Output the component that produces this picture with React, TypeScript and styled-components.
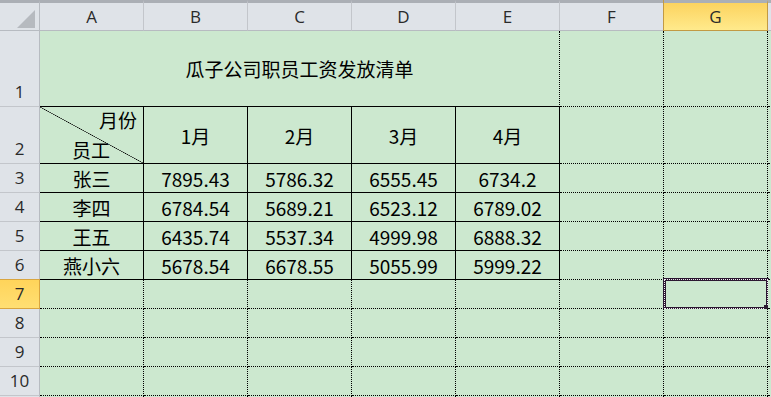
import { createGlobalStyle, styled } from "styled-components";

type Line = "solid" | "dotted" | "none";

const GlobalStyle = createGlobalStyle`
  html, body {
    margin: 0;
    padding: 0;
    overflow: hidden;
    background: #cce8cf;
  }
`

const lineCss = (l: Line = "dotted") =>
  l === "none" ? "1px solid transparent" : l === "solid" ? "1px solid #000" : "1px dotted #000";

const Sheet = styled.div`
  display: grid;
  grid-template-columns: 40px repeat(8, 104px);
  grid-template-rows: 31px 76px 57px repeat(9, 29px);
  width: 771px;
  height: 397px;
  overflow: hidden;
  box-sizing: border-box;
  * {
    box-sizing: border-box;
  }
`

const Corner = styled.div`
  position: relative;
  background: #dfe3e8;
  border-top: 3px solid #abafb5;
  border-right: 1px solid #b7bbc1;
  border-bottom: 1px solid #b7bbc1;

  &::after {
    content: "";
    position: absolute;
    left: 17px;
    top: 7px;
    width: 18px;
    height: 18px;
    background: #b6babf;
    clip-path: polygon(100% 0, 100% 100%, 0 100%);
  }
`

const ColHeader = styled.div<{ $active?: boolean }>`
  display: flex;
  align-items: center;
  justify-content: center;
  border-top: 3px solid #abafb5;
  border-right: 1px solid ${p => (p.$active ? "#c29a44" : "#c3c6cb")};
  border-bottom: 1px solid ${p => (p.$active ? "#c29a44" : "#b7bbc1")};
  background: ${p => (p.$active ? "linear-gradient(#fcd35f, #ffea8c)" : "#dfe3e8")};
  box-shadow: ${p => (p.$active ? "-1px 0 0 #c29a44" : "none")};
  font: 17px "Open Sans", "Noto Sans", sans-serif;
  color: #2a2a2a;
  padding-bottom: 1px;
`

const RowHeader = styled.div<{ $active?: boolean; $tall?: boolean }>`
  display: flex;
  justify-content: center;
  align-items: ${p => (p.$tall ? "flex-end" : "center")};
  padding-bottom: ${p => (p.$tall ? "2px" : "0")};
  background: ${p => (p.$active ? "linear-gradient(#ffd45a, #ffdf73)" : "#dfe3e8")};
  border-right: 1px solid ${p => (p.$active ? "#d9a53f" : "#b7bbc1")};
  border-bottom: 1px solid ${p => (p.$active ? "#d9a53f" : "#c3c6cb")};
  box-shadow: ${p => (p.$active ? "0 -1px 0 #d9a53f" : "none")};
  font: 17px "Open Sans", "Noto Sans", sans-serif;
  line-height: 24px;
  color: #2a2a2a;
`

const Cell = styled.div<{ $right?: Line; $bottom?: Line; $span?: number }>`
  grid-column: span ${p => p.$span ?? 1};
  position: relative;
  display: flex;
  align-items: center;
  justify-content: center;
  background: #cce8cf;
  border-right: ${p => lineCss(p.$right)};
  border-bottom: ${p => lineCss(p.$bottom)};
  font: 19px "Noto Sans CJK SC", sans-serif;
  color: #000;
  white-space: nowrap;
`

// split header cell: 月份 top right, 员工 bottom left, diagonal between
const SplitCell = styled(Cell)`
  flex-direction: column;
  align-items: stretch;
  justify-content: space-between;
  padding: 0 6px 0 32px;
  background:
    linear-gradient(to top right, transparent calc(50% - 0.6px), #000 50%, transparent calc(50% + 0.6px)),
    #cce8cf;
  line-height: 26px;
`

const SplitTop = styled.span`
  text-align: right;
`

const SplitBottom = styled.span`
  text-align: left;
`

const Selection = styled.div`
  position: absolute;
  top: -2px;
  left: -1px;
  right: -2px;
  bottom: -2px;
  border: 3px solid #2c1832;

  &::before {
    content: "";
    position: absolute;
    inset: -2px;
    border: 1px dotted #f5f0f5;
  }

  &::after {
    content: "";
    position: absolute;
    right: -4px;
    bottom: -4px;
    width: 6px;
    height: 6px;
    background: #2b1a30;
  }
`

const columns = ["A", "B", "C", "D", "E", "F", "G", "H"];
const months = ["1月", "2月", "3月", "4月"];

const salaries = [
  ["张三", "7895.43", "5786.32", "6555.45", "6734.2"],
  ["李四", "6784.54", "5689.21", "6523.12", "6789.02"],
  ["王五", "6435.74", "5537.34", "4999.98", "6888.32"],
  ["燕小六", "5678.54", "6678.55", "5055.99", "5999.22"],
];

const activeCol = "G";
const activeRow = 7;
const lastRow = 10; // rows past this only peek in at the bottom edge
const lastCol = "G";

const Spare = ({ row }: { row: number }) => (
  <>
    {["F", "G", "H"].map(c => (
      <Cell key={c}>{c === activeCol && row === activeRow && <Selection />}</Cell>
    ))}
  </>
);

const App = () => {
  return (
    <>
      <GlobalStyle />
      <Sheet>
        <Corner />
        {columns.map(c => (
          <ColHeader key={c} $active={c === activeCol}>{c <= lastCol ? c : ""}</ColHeader>
        ))}

        <RowHeader $tall>1</RowHeader>
        <Cell $span={5} $bottom="solid">瓜子公司职员工资发放清单</Cell>
        <Spare row={1} />

        <RowHeader $tall>2</RowHeader>
        <SplitCell $right="solid" $bottom="solid">
          <SplitTop>月份</SplitTop>
          <SplitBottom>员工</SplitBottom>
        </SplitCell>
        {months.map(m => (
          <Cell key={m} $right="solid" $bottom="solid">{m}</Cell>
        ))}
        <Spare row={2} />

        {salaries.map((r, i) => (
          <Row key={r[0]} n={i + 3} values={r} />
        ))}

        {[7, 8, 9, 10, 11].map(n => (
          <Blank key={n} n={n} />
        ))}
      </Sheet>
    </>
  )
}

const Row = ({ n, values }: { n: number; values: string[] }) => (
  <>
    <RowHeader $active={n === activeRow}>{n}</RowHeader>
    {values.map((v, i) => (
      <Cell key={i} $right="solid" $bottom="solid">{v}</Cell>
    ))}
    <Spare row={n} />
  </>
);

const Blank = ({ n }: { n: number }) => (
  <>
    <RowHeader $active={n === activeRow}>{n <= lastRow ? n : ""}</RowHeader>
    {columns.slice(0, 5).map(c => (
      <Cell key={c} />
    ))}
    <Spare row={n} />
  </>
);

export default App;
